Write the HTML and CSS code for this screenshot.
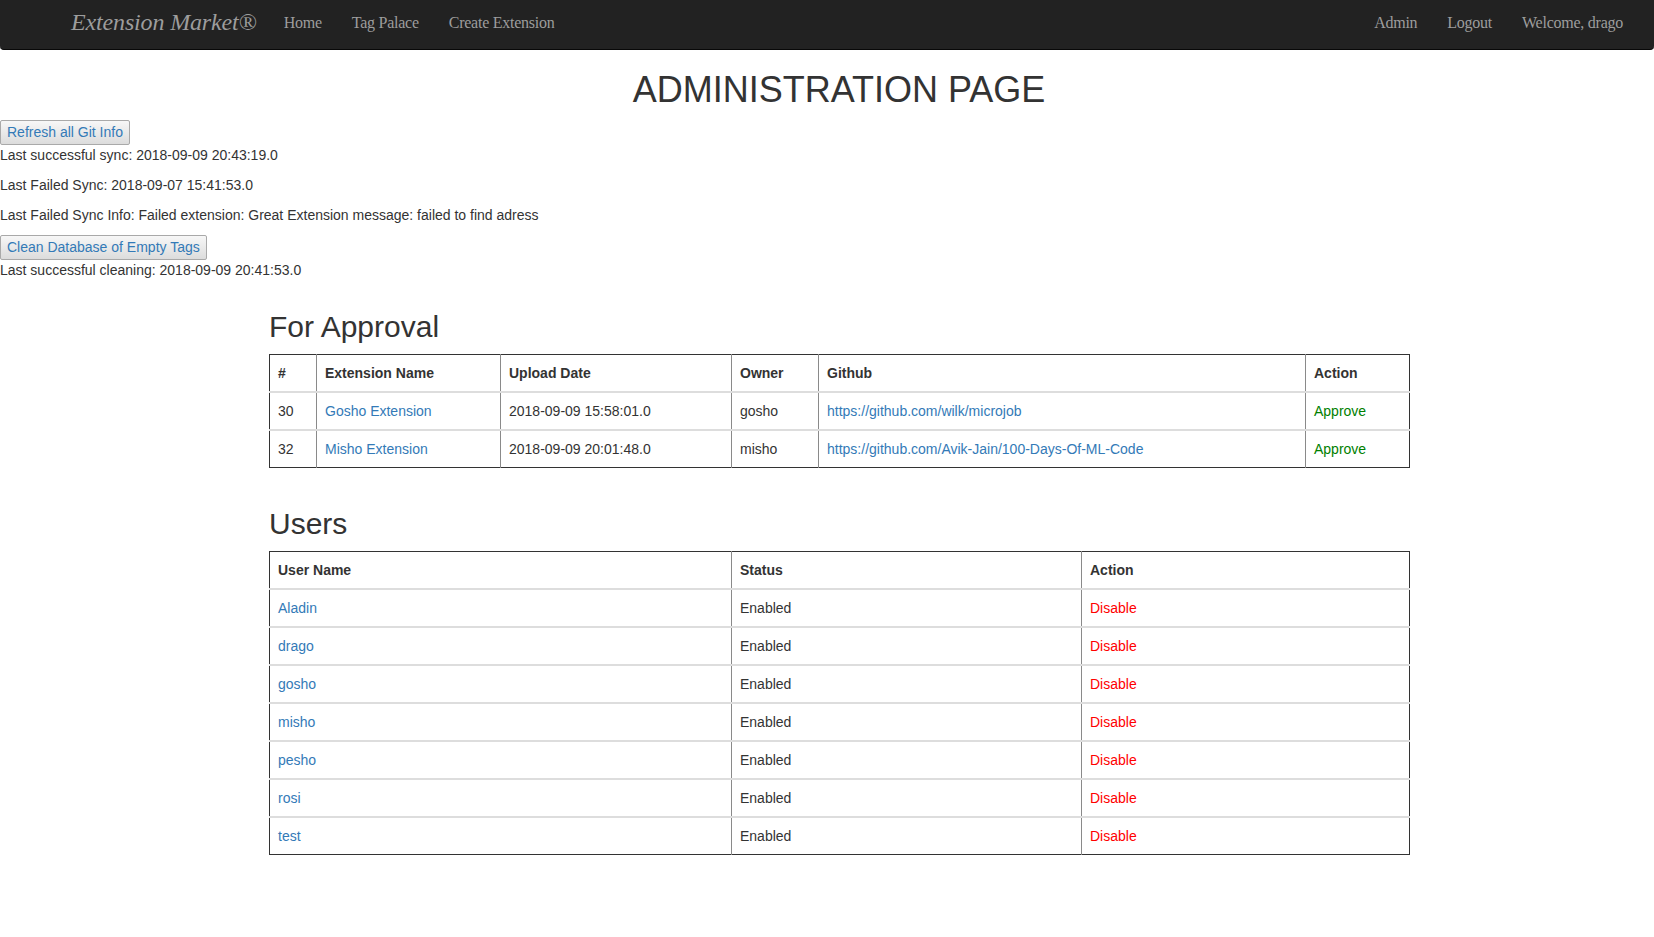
FILE: index.html
```html
<!DOCTYPE html>
<html lang="en">
<head>
<meta charset="utf-8">
<title>Administration Page</title>
<link rel="stylesheet" href="styles.css">
</head>
<body>
<nav class="navbar">
  <div class="nav-group">
    <a class="brand" href="#">Extension Market®</a>
    <ul class="nav-links">
      <li><a href="#">Home</a></li>
      <li><a href="#">Tag Palace</a></li>
      <li><a href="#">Create Extension</a></li>
    </ul>
  </div>
  <ul class="nav-links">
    <li><a href="#">Admin</a></li>
    <li><a href="#">Logout</a></li>
    <li><a href="#">Welcome, drago</a></li>
  </ul>
</nav>

<main class="page">
  <div class="content">
    <h1 class="page-title">ADMINISTRATION PAGE</h1>
  </div>

  <div class="tools">
    <button class="tool-btn" type="button">Refresh all Git Info</button>
    <p class="info">Last successful sync: 2018-09-09 20:43:19.0</p>
    <p class="info">Last Failed Sync: 2018-09-07 15:41:53.0</p>
    <p class="info">Last Failed Sync Info: Failed extension: Great Extension message: failed to find adress</p>
    <button class="tool-btn" type="button">Clean Database of Empty Tags</button>
    <p class="info">Last successful cleaning: 2018-09-09 20:41:53.0</p>
  </div>

  <section class="content">
    <h2 class="section-title">For Approval</h2>
    <table class="data">
      <colgroup>
        <col class="c-num"><col class="c-name"><col class="c-date"><col class="c-owner"><col class="c-git"><col class="c-action">
      </colgroup>
      <thead>
        <tr><th>#</th><th>Extension Name</th><th>Upload Date</th><th>Owner</th><th>Github</th><th>Action</th></tr>
      </thead>
      <tbody>
        <tr><td>30</td><td><a class="link" href="#">Gosho Extension</a></td><td>2018-09-09 15:58:01.0</td><td>gosho</td><td><a class="link" href="#">https://github.com/wilk/microjob</a></td><td><a class="approve" href="#">Approve</a></td></tr>
        <tr><td>32</td><td><a class="link" href="#">Misho Extension</a></td><td>2018-09-09 20:01:48.0</td><td>misho</td><td><a class="link" href="#">https://github.com/Avik-Jain/100-Days-Of-ML-Code</a></td><td><a class="approve" href="#">Approve</a></td></tr>
      </tbody>
    </table>
  </section>

  <section class="content">
    <h2 class="section-title users-title">Users</h2>
    <table class="data">
      <colgroup>
        <col class="u-name"><col class="u-status"><col class="u-action">
      </colgroup>
      <thead>
        <tr><th>User Name</th><th>Status</th><th>Action</th></tr>
      </thead>
      <tbody>
        <tr><td><a class="link" href="#">Aladin</a></td><td>Enabled</td><td><a class="disable" href="#">Disable</a></td></tr>
        <tr><td><a class="link" href="#">drago</a></td><td>Enabled</td><td><a class="disable" href="#">Disable</a></td></tr>
        <tr><td><a class="link" href="#">gosho</a></td><td>Enabled</td><td><a class="disable" href="#">Disable</a></td></tr>
        <tr><td><a class="link" href="#">misho</a></td><td>Enabled</td><td><a class="disable" href="#">Disable</a></td></tr>
        <tr><td><a class="link" href="#">pesho</a></td><td>Enabled</td><td><a class="disable" href="#">Disable</a></td></tr>
        <tr><td><a class="link" href="#">rosi</a></td><td>Enabled</td><td><a class="disable" href="#">Disable</a></td></tr>
        <tr><td><a class="link" href="#">test</a></td><td>Enabled</td><td><a class="disable" href="#">Disable</a></td></tr>
      </tbody>
    </table>
  </section>
</main>
</body>
</html>
```

FILE: styles.css
```css
* { box-sizing: border-box; }

html, body {
  margin: 0;
  padding: 0;
  background: #fff;
}

body {
  font-family: "Liberation Sans", Arial, Helvetica, sans-serif;
  font-size: 14px;
  line-height: 20px;
  color: #333;
}

a { text-decoration: none; }

/* Navbar */
.navbar {
  height: 50px;
  background: #222;
  border-bottom: 1px solid #080808;
  border-radius: 0 0 4px 4px;
  display: flex;
  align-items: center;
  justify-content: space-between;
  padding: 0 16px 4px 71px;
  font-family: "Liberation Serif", "Times New Roman", serif;
}

.nav-group {
  display: flex;
  align-items: center;
}

.brand {
  color: #9d9d9d;
  font-style: italic;
  font-size: 24px;
  line-height: 30px;
  letter-spacing: -0.15px;
  margin: 0 12px 2px 0;
}

.nav-links {
  list-style: none;
  margin: 0;
  padding: 0;
  display: flex;
  align-items: center;
}

.nav-links a {
  display: block;
  padding: 0 15px;
  color: #9d9d9d;
  font-size: 16px;
  line-height: 20px;
  letter-spacing: -0.25px;
}

/* Page */
.page {
  padding-bottom: 40px;
}

.content {
  width: 1140px;
  margin-left: 269px;
}

.page-title {
  margin: 20px 0 10px;
  font-size: 36px;
  line-height: 39.6px;
  font-weight: normal;
  text-align: center;
  color: #333;
}

.tools {
  display: flex;
  flex-direction: column;
  align-items: flex-start;
}

.tool-btn {
  font-family: "Liberation Sans", Arial, sans-serif;
  font-size: 14px;
  line-height: 21px;
  height: 25px;
  padding: 1px 6px;
  color: #337ab7;
  background: linear-gradient(#f7f7f7, #dcdcdc);
  border: 1px solid #a9a9a9;
  border-radius: 2px;
  margin: 0;
}

.info {
  margin: 0 0 10px;
}

.section-title {
  margin: 20px 0 11px;
  font-size: 30px;
  line-height: 33px;
  font-weight: normal;
  color: #333;
}

.users-title {
  margin-top: 39px;
}

/* Tables */
.data {
  width: 1140px;
  table-layout: fixed;
  border-collapse: collapse;
  border: 1px solid #333;
  margin-bottom: 20px;
}

.data th,
.data td {
  padding: 8px;
  line-height: 20px;
  text-align: left;
  vertical-align: top;
  border-top: 2px solid #ddd;
  border-left: 1px solid #8a8a8a;
  white-space: nowrap;
}

.data th:first-child,
.data td:first-child {
  border-left: none;
}

.data thead th {
  border-top: none;
  border-bottom: 2px solid #ddd;
  font-weight: bold;
}

.c-num { width: 47px; }
.c-name { width: 184px; }
.c-date { width: 231px; }
.c-owner { width: 87px; }
.c-git { width: 487px; }
.c-action { width: 104px; }

.u-name { width: 462px; }
.u-status { width: 350px; }
.u-action { width: 328px; }

.link { color: #337ab7; }
.approve { color: #008000; }
.disable { color: #ff0000; }
```
